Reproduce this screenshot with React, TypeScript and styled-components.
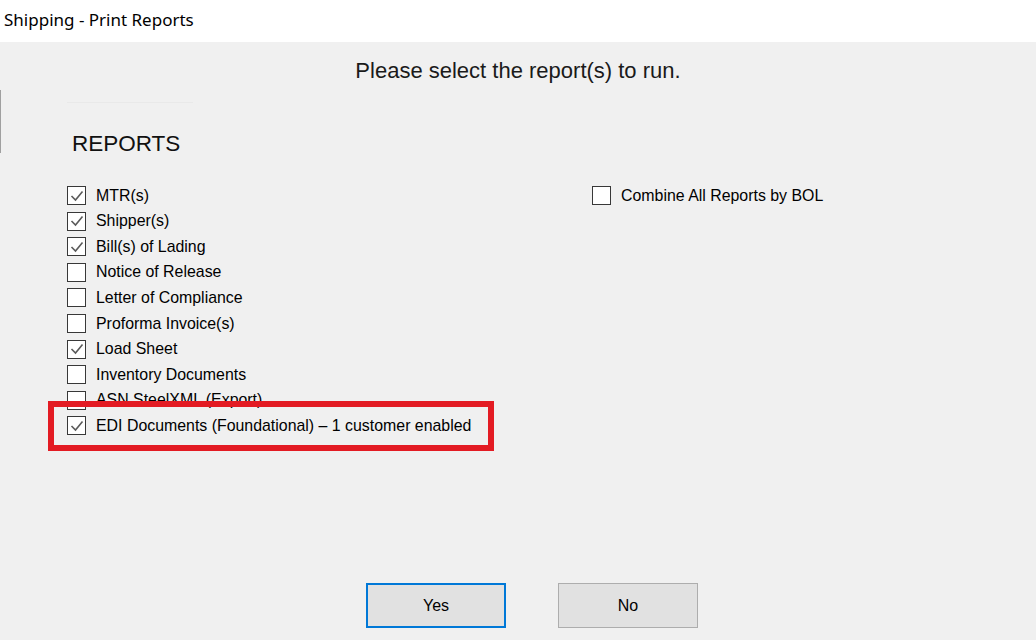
import React from "react"
import styled, { createGlobalStyle } from "styled-components"

const GlobalStyle = createGlobalStyle`
  html, body {
    margin: 0;
    padding: 0;
    background: #f0f0f0;
  }
  body {
    font-family: "Liberation Sans", Arial, sans-serif;
    color: #000;
  }
`

const Window = styled.div`
  width: 1036px;
  height: 640px;
  display: flex;
  flex-direction: column;
  overflow: hidden;
`

const TitleBar = styled.div`
  height: 42px;
  flex: none;
  background: #fff;
  display: flex;
  align-items: center;
  padding: 0 0 4px 4px;
  box-sizing: border-box;
  font-family: "Noto Sans", "Open Sans", sans-serif;
  font-size: 17px;
  color: #000;
`

const Body = styled.div`
  position: relative;
  flex: 1;
  padding-top: 17px;

  &::before {
    content: "";
    position: absolute;
    left: 0;
    top: 48px;
    width: 1px;
    height: 63px;
    background: #a0a0a0;
  }
`

const Heading = styled.div`
  text-align: center;
  font-size: 22px;
  line-height: 24px;
  color: #1a1a1a;
`

const Content = styled.div`
  display: grid;
  grid-template-columns: 525px 1fr;
  padding-left: 67px;
  margin-top: 19px;
`

const Divider = styled.div`
  grid-column: 1 / -1;
  width: 126px;
  height: 1px;
  background: #e9e9e9;
`

const SectionLabel = styled.div`
  grid-column: 1 / -1;
  margin: 28px 0 26px 5px;
  font-size: 22.5px;
  line-height: 26px;
  color: #111;
`

const CheckList = styled.div`
  display: flex;
  flex-direction: column;
`

const Row = styled.label`
  position: relative;
  display: flex;
  align-items: center;
  gap: 10px;
  height: 25.55px;
  font-size: 15.9px;
  color: #000;
  white-space: nowrap;
`

const Box = styled.span`
  width: 19px;
  height: 19px;
  box-sizing: border-box;
  border: 1.6px solid #383838;
  background: #fff;
  display: flex;
  align-items: center;
  justify-content: center;
  flex: none;
`

const Highlight = styled.span`
  position: absolute;
  left: -19px;
  top: -12px;
  width: 446px;
  height: 50px;
  box-sizing: border-box;
  border: 6px solid #e31b23;
  pointer-events: none;
`

const ButtonRow = styled.div`
  display: flex;
  gap: 52px;
  margin-top: 145px;
  padding-left: 366px;
`

const Button = styled.button<{ $focused?: boolean }>`
  width: 140px;
  height: 45px;
  box-sizing: border-box;
  background: #e1e1e1;
  border: ${(p) => (p.$focused ? "2px solid #0078d7" : "1px solid #adadad")};
  font-family: "Liberation Sans", Arial, sans-serif;
  font-size: 16px;
  color: #000;
  padding: 0;
`

function Check() {
  return (
    <svg width="16" height="16" viewBox="0 0 16 16">
      <polyline points="2.5,8 6.5,12 13.5,3.5" fill="none" stroke="#5a5a5a" strokeWidth="1.6" />
    </svg>
  )
}

interface ItemProps {
  label: string
  checked?: boolean
  highlight?: boolean
}

function Item({ label, checked, highlight }: ItemProps) {
  return (
    <Row>
      <Box>{checked && <Check />}</Box>
      {label}
      {highlight && <Highlight />}
    </Row>
  )
}

const reports = [
  { label: "MTR(s)", checked: true },
  { label: "Shipper(s)", checked: true },
  { label: "Bill(s) of Lading", checked: true },
  { label: "Notice of Release" },
  { label: "Letter of Compliance" },
  { label: "Proforma Invoice(s)" },
  { label: "Load Sheet", checked: true },
  { label: "Inventory Documents" },
  { label: "ASN SteelXML (Export)" },
  { label: "EDI Documents (Foundational) \u2013 1 customer enabled", checked: true, highlight: true },
]

export default function App() {
  return (
    <Window>
      <GlobalStyle />
      <TitleBar>Shipping - Print Reports</TitleBar>
      <Body>
        <Heading>Please select the report(s) to run.</Heading>
        <Content>
          <Divider />
          <SectionLabel>REPORTS</SectionLabel>
          <CheckList>
            {reports.map((r) => (
              <Item key={r.label} {...r} />
            ))}
          </CheckList>
          <CheckList>
            <Item label="Combine All Reports by BOL" />
          </CheckList>
        </Content>
        <ButtonRow>
          <Button $focused>Yes</Button>
          <Button>No</Button>
        </ButtonRow>
      </Body>
    </Window>
  )
}
